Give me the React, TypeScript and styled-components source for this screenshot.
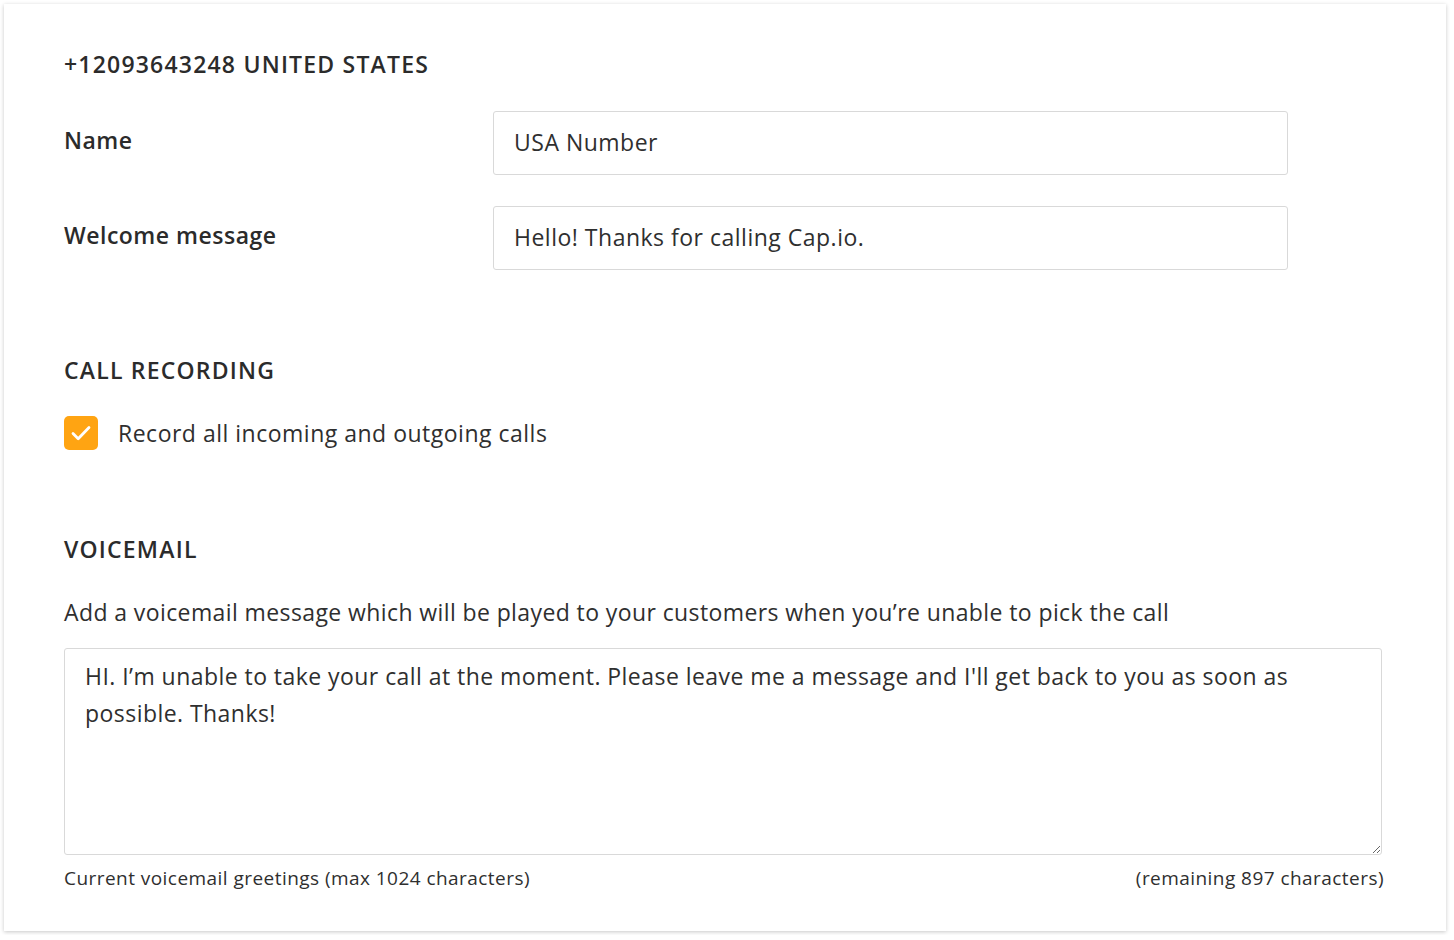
import styled, { createGlobalStyle } from 'styled-components';

const GlobalStyle = createGlobalStyle`
  html, body {
    margin: 0;
    padding: 0;
    background: #ffffff;
  }
  body {
    font-family: "Open Sans", Lato, "Liberation Sans", sans-serif;
    color: #2f2f2f;
  }
`;

const StyledCard = styled.section`
  margin: 4px;
  width: 1442px;
  box-sizing: border-box;
  padding: 45px 64px 40px 60px;
  background: #fff;
  box-shadow: 0 1px 4px rgba(0, 0, 0, 0.22);
`;

const StyledHeading = styled.h2<{ gap?: number }>`
  margin: 0;
  margin-top: ${({ gap }) => gap ?? 0}px;
  font-size: 23px;
  line-height: 30px;
  font-weight: 600;
  letter-spacing: 1.2px;
  color: #2b2b2b;
`;

const StyledFieldRow = styled.div<{ gap: number }>`
  display: grid;
  grid-template-columns: 429px 795px;
  margin-top: ${({ gap }) => gap}px;
`;

const StyledLabel = styled.label`
  padding-top: 14px;
  font-size: 23px;
  line-height: 30px;
  font-weight: 600;
  letter-spacing: 0.5px;
  color: #2b2b2b;
`;

const StyledInput = styled.input`
  box-sizing: border-box;
  height: 64px;
  padding: 0 20px 2px;
  border: 1px solid #d9d9d9;
  border-radius: 3px;
  font-family: inherit;
  font-size: 23px;
  letter-spacing: 0.5px;
  color: #2f2f2f;
  outline: none;
`;

const StyledCheckRow = styled.label`
  display: flex;
  align-items: center;
  gap: 20px;
  margin-top: 31px;
  font-size: 23px;
  line-height: 34px;
  letter-spacing: 0.5px;
  color: #2f2f2f;
`;

const StyledCheckBox = styled.span`
  display: flex;
  align-items: center;
  justify-content: center;
  width: 34px;
  height: 34px;
  border-radius: 5px;
  background: #ffa412;
`;

const StyledDescription = styled.p`
  margin: 33px 0 0;
  font-size: 23px;
  line-height: 30px;
  letter-spacing: 0.4px;
  color: #2f2f2f;
`;

const StyledTextArea = styled.textarea`
  display: block;
  box-sizing: border-box;
  width: 1318px;
  height: 207px;
  margin-top: 21px;
  padding: 9px 20px;
  border: 1px solid #d9d9d9;
  border-radius: 3px;
  font-family: inherit;
  font-size: 23px;
  line-height: 37px;
  letter-spacing: 0.45px;
  color: #2f2f2f;
  resize: vertical;
  outline: none;
`;

const StyledFootnote = styled.div`
  display: flex;
  justify-content: space-between;
  width: 1320px;
  margin-top: 10px;
  font-size: 19px;
  line-height: 26px;
  letter-spacing: 0.45px;
  color: #2f2f2f;
`;

export default function App() {
  return (
    <>
      <GlobalStyle />
      <StyledCard>
        <StyledHeading>+12093643248 UNITED STATES</StyledHeading>

        <StyledFieldRow gap={32}>
          <StyledLabel>Name</StyledLabel>
          <StyledInput defaultValue="USA Number" />
        </StyledFieldRow>
        <StyledFieldRow gap={31}>
          <StyledLabel>Welcome message</StyledLabel>
          <StyledInput defaultValue="Hello! Thanks for calling Cap.io." />
        </StyledFieldRow>

        <StyledHeading gap={85}>CALL RECORDING</StyledHeading>
        <StyledCheckRow>
          <StyledCheckBox>
            <svg width="22" height="22" viewBox="0 0 22 22" fill="none">
              <path d="M3 11.5l5.2 5.2L19 5.5" stroke="#fff" strokeWidth="2.8" strokeLinecap="round" strokeLinejoin="round" />
            </svg>
          </StyledCheckBox>
          Record all incoming and outgoing calls
        </StyledCheckRow>

        <StyledHeading gap={84}>VOICEMAIL</StyledHeading>
        <StyledDescription>
          Add a voicemail message which will be played to your customers when you’re unable to pick the call
        </StyledDescription>
        <StyledTextArea defaultValue="HI. I’m unable to take your call at the moment. Please leave me a message and I'll get back to you as soon as possible. Thanks!" />
        <StyledFootnote>
          <span>Current voicemail greetings (max 1024 characters)</span>
          <span>(remaining 897 characters)</span>
        </StyledFootnote>
      </StyledCard>
    </>
  );
}
